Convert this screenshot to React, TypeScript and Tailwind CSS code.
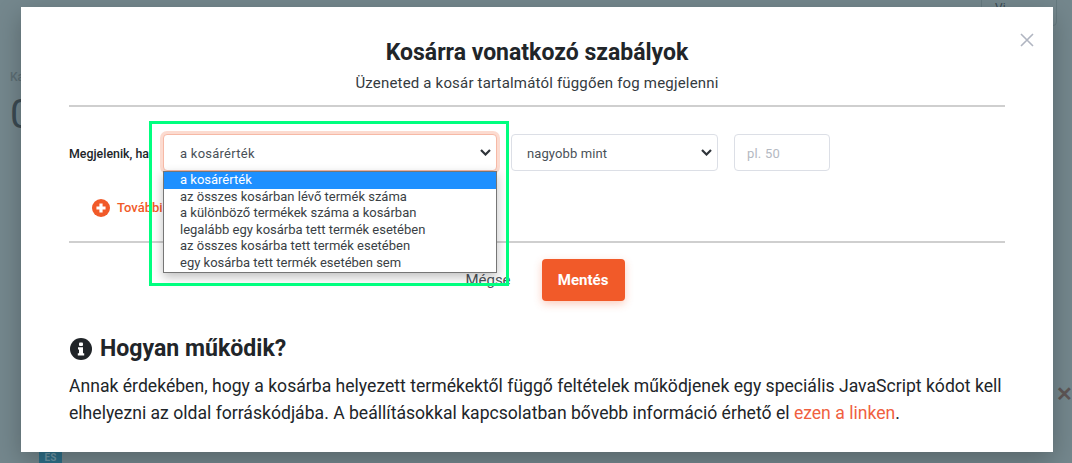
import React from "react";

const options = [
  "a kosárérték",
  "az összes kosárban lévő termék száma",
  "a különböző termékek száma a kosárban",
  "legalább egy kosárba tett termék esetében",
  "az összes kosárba tett termék esetében",
  "egy kosárba tett termék esetében sem",
];

function Chevron() {
  return (
    <svg width="11" height="7" viewBox="0 0 11 7" className="absolute right-[5px] top-[14px]">
      <path d="M1 1 L5.5 5.5 L10 1" fill="none" stroke="#2f343a" strokeWidth="2.2" />
    </svg>
  );
}

export default function App() {
  return (
    <div className="relative h-[463px] w-[1072px] overflow-hidden bg-[#74878d] pl-[21px] pt-[7px] font-['Roboto',sans-serif]">
      {/* dimmed page behind the modal */}
      <div className="absolute left-[10px] top-[69px] text-[12px] leading-[16px] font-medium text-[#5c6d74]">Ka</div>
      <div className="absolute left-[10px] top-[93px] text-[40px] leading-[44px] text-[#3b4a52]">0</div>
      <div className="absolute left-[981px] top-[-4px] h-[30px] w-[76px] rounded-[4px] border border-[#667a80] pl-[13px] pt-[6px] text-[12px] leading-[10px] text-[#3b4a52]"><span>Vi</span></div>
      <div className="absolute left-[1056px] top-[384px] text-[20px] leading-[20px] font-bold text-[#5e5656]">✕</div>
      <div className="absolute left-[39px] top-[452px] h-[11px] w-[23px] bg-[#2e6f88] text-center text-[10px] leading-[12px] font-bold text-[#6f97a6]">ES</div>

      {/* modal */}
      <div className="relative h-[445px] w-[1032px] overflow-hidden bg-white px-[48px] pt-[32px] text-[#212529] shadow-[0_8px_24px_rgba(0,0,0,0.25)]">
        <button className="absolute right-[19px] top-[26px]">
          <svg width="14" height="14" viewBox="0 0 14 14" className="block">
            <path d="M1 1 L13 13 M13 1 L1 13" stroke="#b0b5c1" strokeWidth="1.6" fill="none" />
          </svg>
        </button>

        <h2 className="text-center text-[23px] leading-[28px] font-bold text-[#212529]">Kosárra vonatkozó szabályok</h2>
        <p className="mt-[6px] text-center text-[15px] leading-[20px] tracking-[0.18px] text-[#343a40]">Üzeneted a kosár tartalmától függően fog megjelenni</p>
        <div className="mt-[12px] h-[2px] bg-[#cfcfcf]" />

        <div className="mt-[27px] flex h-[37px] items-center">
          <label className="w-[94px] shrink-0 pt-[3px] text-[12.4px] font-medium whitespace-nowrap text-[#212529]">Megjelenik, ha</label>
          <div className="relative h-[37px] w-[334px] rounded-[4px] border border-[#f6b9a6] bg-white pl-[16px] text-[13px] leading-[37px] tracking-[0.25px] text-[#495057] shadow-[0_0_0_3px_rgba(241,90,41,0.22)]">
            a kosárérték
            <Chevron />
            {/* open dropdown list */}
            <ul className="absolute left-[-1px] top-[36px] z-10 w-[334px] border border-[#767676] bg-white text-[13px] leading-[16.6px] tracking-normal text-[#3a3f45] shadow-[0_4px_10px_rgba(0,0,0,0.25)]">
              {options.map((o, i) => (
                <li key={o} className={i === 0 ? "bg-[#1e90ff] pl-[16px] text-white" : "pl-[16px]"}>{o}</li>
              ))}
            </ul>
            {/* green highlight */}
            <div className="pointer-events-none absolute left-[-15px] top-[-14px] z-20 h-[165px] w-[360px] border-[3px] border-[#00ff7f]" />
          </div>
          <div className="relative ml-[14px] h-[37px] w-[207px] rounded-[4px] border border-[#dcdfe6] bg-white pl-[15px] text-[13px] leading-[37px] tracking-[0.1px] text-[#495057]">
            nagyobb mint
            <Chevron />
          </div>
          <div className="ml-[16px] h-[37px] w-[96px] rounded-[4px] border border-[#dcdfe6] bg-white pl-[12px] text-[13px] leading-[37px] tracking-[0.2px] text-[#b4b9c2]">pl. 50</div>
        </div>

        <div className="mt-[27px] ml-[23px] flex h-[20px] items-center gap-[7px]">
          <svg width="18" height="18" viewBox="0 0 17 17">
            <circle cx="8.5" cy="8.5" r="8.5" fill="#f15a29" />
            <path d="M8.5 4.2 V12.8 M4.2 8.5 H12.8" stroke="#fff" strokeWidth="3" />
          </svg>
          <span className="text-[13px] font-medium text-[#f15a29]">További feltétel</span>
        </div>

        <div className="mt-[23px] h-[2px] bg-[#cfcfcf]" />

        <div className="mt-[16px] flex h-[42px] items-center justify-center gap-[31px] pl-[16px]">
          <span className="text-[15px] text-[#4c5258]">Mégse</span>
          <button className="h-[42px] w-[83px] rounded-[4px] bg-[#f15a29] text-[15px] font-bold text-white shadow-[0_3px_8px_rgba(241,90,41,0.3)]">Mentés</button>
        </div>

        <h3 className="mt-[31px] flex items-center gap-[8px] text-[23.1px] leading-[34px] font-bold text-[#212529]">
          <svg width="22" height="22" viewBox="0 0 22 22" className="ml-[1px]">
            <circle cx="11" cy="11" r="11" fill="#212529" />
            <rect x="9" y="4.5" width="4" height="3.4" rx="1" fill="#fff" />
            <path d="M8 9.3 H13 V15.2 H14.2 V17.5 H7.8 V15.2 H9 V11.5 H8 Z" fill="#fff" />
          </svg>
          Hogyan működik?
        </h3>
        <p className="mt-[7px] text-[17.6px] leading-[26.6px] text-[#212529]">
          Annak érdekében, hogy a kosárba helyezett termékektől függő feltételek működjenek egy speciális JavaScript kódot kell elhelyezni az oldal forráskódjába. A beállításokkal kapcsolatban bővebb információ érhető el <span className="text-[#f0603f]">ezen a linken</span>.
        </p>
      </div>
    </div>
  );
}
